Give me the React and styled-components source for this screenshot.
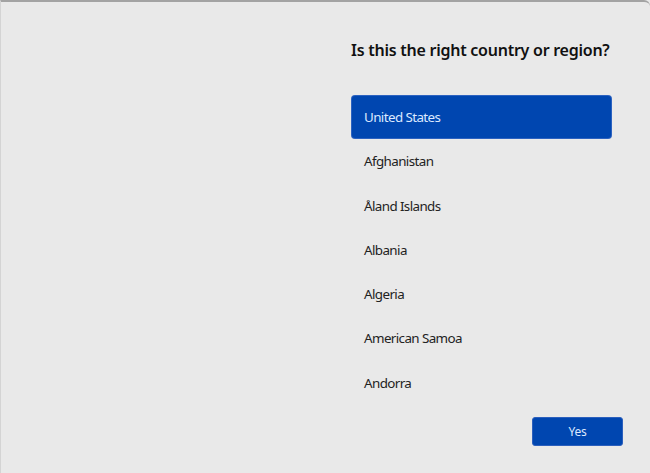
import React from "react";
import styled, { createGlobalStyle } from "styled-components";

const GlobalStyle = createGlobalStyle`
	html, body {
		margin: 0;
		padding: 0;
		background: #e9e9e9;
	}
	body {
		font-family: "Noto Sans", "Open Sans", sans-serif;
	}
`

const Frame = styled.main`
	width: 650px;
	height: 473px;
	box-sizing: border-box;
	border-top: 2px solid #a3a3a3;
	border-left: 1px solid #d4d4d4;
	border-top-right-radius: 6px;
	background: #e9e9e9;
	display: grid;
	grid-template-columns: 350px 1fr;
`

const Panel = styled.section`
	grid-column: 2;
	display: flex;
	flex-direction: column;
	padding: 36px 27px 0 0;
`

const Title = styled.h1`
	margin: 0 0 34px 0;
	font-size: 16px;
	font-weight: 600;
	color: #111;
	line-height: 24px;
	white-space: nowrap;
	letter-spacing: -0.25px;
`

const List = styled.ul`
	list-style: none;
	margin: 0 0 0 1px;
	padding: 0;
	width: 259px;
	display: flex;
	flex-direction: column;
	gap: 2.3px;
`

const Item = styled.li`
	height: 42px;
	box-sizing: border-box;
	display: flex;
	align-items: center;
	padding-left: 12px;
	font-size: 13.4px;
	letter-spacing: -0.6px;
	border-radius: 3px;
	color: ${p => (p.selected ? "#dce9ff" : "#222")};
	background: ${p => (p.selected ? "#0046b0" : "transparent")};
	box-shadow: ${p => (p.selected ? "0 0 0 1px #2c62c0" : "none")};
`

const Footer = styled.div`
	display: flex;
	justify-content: flex-end;
	margin-top: 13px;
`

const YesButton = styled.button`
	width: 91px;
	height: 29px;
	border: 1px solid #2b5fbd;
	border-radius: 3px;
	background: #0046b0;
	color: #dce9ff;
	font-family: inherit;
	font-size: 12px;
	letter-spacing: -0.3px;
`

const countries = [
	"United States",
	"Afghanistan",
	"Åland Islands",
	"Albania",
	"Algeria",
	"American Samoa",
	"Andorra",
]

const App = () => {
	return (
		<div>
			<GlobalStyle />
			<Frame>
				<Panel>
					<Title>Is this the right country or region?</Title>
					<List>
						{countries.map((name, i) => (
							<Item key={name} selected={i === 0}>{name}</Item>
						))}
					</List>
					<Footer>
						<YesButton>Yes</YesButton>
					</Footer>
				</Panel>
			</Frame>
		</div>
	);
};
export default App;
